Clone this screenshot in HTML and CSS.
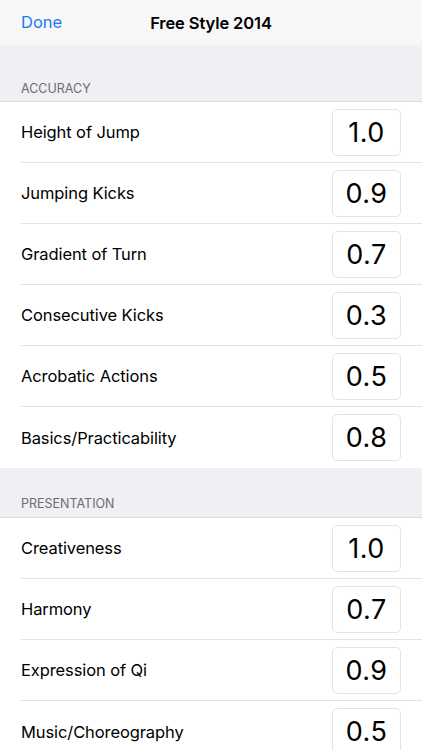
FILE: index.html
```html
<!DOCTYPE html>
<html>
<head>
<meta charset="utf-8">
<link rel="stylesheet" href="styles.css">
</head>
<body>
<div class="nav">
  <span class="done">Done</span>
  <span class="title">Free Style 2014</span>
</div>
<div class="spacer"></div>
<div class="section-header">ACCURACY</div>
<div class="group">
  <div class="row"><span class="label">Height of Jump</span><span class="value">1.0</span></div>
  <div class="row"><span class="label">Jumping Kicks</span><span class="value">0.9</span></div>
  <div class="row"><span class="label">Gradient of Turn</span><span class="value">0.7</span></div>
  <div class="row"><span class="label">Consecutive Kicks</span><span class="value">0.3</span></div>
  <div class="row"><span class="label">Acrobatic Actions</span><span class="value">0.5</span></div>
  <div class="row"><span class="label">Basics/Practicability</span><span class="value">0.8</span></div>
</div>
<div class="section-header second">PRESENTATION</div>
<div class="group">
  <div class="row"><span class="label">Creativeness</span><span class="value">1.0</span></div>
  <div class="row"><span class="label">Harmony</span><span class="value">0.7</span></div>
  <div class="row"><span class="label">Expression of Qi</span><span class="value">0.9</span></div>
  <div class="row"><span class="label">Music/Choreography</span><span class="value">0.5</span></div>
</div>
</body>
</html>
```
FILE: styles.css
```css
html, body {
  margin: 0;
  padding: 0;
  background: #efeff4;
  font-family: Inter, "Noto Sans", "Liberation Sans", sans-serif;
  color: #000;
  overflow: hidden;
}
.nav {
  height: 45px;
  background: #f7f7f7;
  display: flex;
  align-items: center;
  justify-content: center;
  position: relative;
}
.done {
  position: absolute;
  left: 21px;
  top: 12px;
  font-size: 16.5px;
  color: #1a7cf5;
}
.title {
  font-size: 16.5px;
  font-weight: 600;
  letter-spacing: -0.1px;
}
.spacer {
  height: 28px;
}
.section-header {
  height: 29px;
  padding-left: 21px;
  font-size: 12.5px;
  color: #6d6d72;
  box-sizing: border-box;
  padding-top: 8px;
  border-bottom: 1px solid #dcdcdf;
}
.section-header.second {
  height: 50px;
  padding-top: 28px;
}
.group {
  background: #fff;
}
.row {
  height: 61px;
  margin-left: 21px;
  padding-right: 21px;
  display: flex;
  align-items: center;
  justify-content: space-between;
  border-bottom: 1px solid #e3e3e6;
  box-sizing: border-box;
}
.group .row:last-child {
  border-bottom: none;
}
.label {
  font-size: 16.5px;
  letter-spacing: -0.1px;
}
.value {
  width: 69px;
  height: 47px;
  box-sizing: border-box;
  border: 1px solid #e4e4e4;
  border-radius: 5px;
  display: flex;
  align-items: center;
  justify-content: center;
  font-size: 27px;
  letter-spacing: 0.5px;
}
```
